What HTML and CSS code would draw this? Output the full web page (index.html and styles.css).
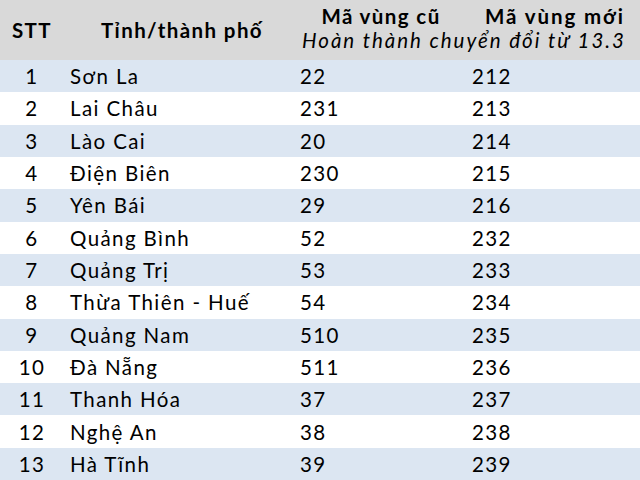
FILE: index.html
```html
<!DOCTYPE html>
<html lang="vi">
<head>
<meta charset="utf-8">
<link rel="stylesheet" href="styles.css">
</head>
<body>
<div class="table">
  <div class="head">
    <div class="h-stt">STT</div>
    <div class="h-name">Tỉnh/thành phố</div>
    <div class="h-old">Mã vùng cũ</div>
    <div class="h-new">Mã vùng mới</div>
    <div class="h-note">Hoàn thành chuyển đổi từ 13.3</div>
  </div>
  <div class="body">
    <div class="row alt"><span class="stt">1</span><span class="name">Sơn La</span><span class="old">22</span><span class="new">212</span></div>
    <div class="row"><span class="stt">2</span><span class="name">Lai Châu</span><span class="old">231</span><span class="new">213</span></div>
    <div class="row alt"><span class="stt">3</span><span class="name">Lào Cai</span><span class="old">20</span><span class="new">214</span></div>
    <div class="row"><span class="stt">4</span><span class="name">Điện Biên</span><span class="old">230</span><span class="new">215</span></div>
    <div class="row alt"><span class="stt">5</span><span class="name">Yên Bái</span><span class="old">29</span><span class="new">216</span></div>
    <div class="row"><span class="stt">6</span><span class="name">Quảng Bình</span><span class="old">52</span><span class="new">232</span></div>
    <div class="row alt"><span class="stt">7</span><span class="name">Quảng Trị</span><span class="old">53</span><span class="new">233</span></div>
    <div class="row"><span class="stt">8</span><span class="name">Thừa Thiên - Huế</span><span class="old">54</span><span class="new">234</span></div>
    <div class="row alt"><span class="stt">9</span><span class="name">Quảng Nam</span><span class="old">510</span><span class="new">235</span></div>
    <div class="row"><span class="stt">10</span><span class="name">Đà Nẵng</span><span class="old">511</span><span class="new">236</span></div>
    <div class="row alt"><span class="stt">11</span><span class="name">Thanh Hóa</span><span class="old">37</span><span class="new">237</span></div>
    <div class="row"><span class="stt">12</span><span class="name">Nghệ An</span><span class="old">38</span><span class="new">238</span></div>
    <div class="row alt"><span class="stt">13</span><span class="name">Hà Tĩnh</span><span class="old">39</span><span class="new">239</span></div>
  </div>
</div>
</body>
</html>
```
FILE: styles.css
```css
html, body {
  margin: 0;
  padding: 0;
  background: #ffffff;
}
body {
  width: 640px;
  height: 480px;
  overflow: hidden;
  font-family: Lato, "Open Sans", "Liberation Sans", sans-serif;
  color: #000000;
  font-size: 20.5px;
  letter-spacing: 1.4px;
}
.table {
  display: flex;
  flex-direction: column;
  height: 480px;
}
.head {
  height: 60px;
  background: #d9d9d9;
  display: grid;
  grid-template-columns: 64px 236px 172px 168px;
  grid-template-rows: 31px 18px 11px;
  font-weight: bold;
}
.h-stt, .h-name {
  grid-row: 1 / 4;
  display: flex;
  align-items: center;
  justify-content: center;
}
.h-old {
  display: flex;
  align-items: center;
  justify-content: center;
  padding-right: 10px;
}
.h-new {
  display: flex;
  align-items: center;
  justify-content: center;
  padding-right: 2px;
  letter-spacing: 1.9px;
}
.h-note {
  grid-column: 3 / 5;
  grid-row: 2;
  display: flex;
  align-items: center;
  justify-content: center;
  font-weight: normal;
  font-style: italic;
  padding-right: 12px;
  letter-spacing: 1.95px;
  white-space: nowrap;
}
.body {
  flex: 1;
  display: flex;
  flex-direction: column;
}
.row {
  flex: 1;
  display: grid;
  grid-template-columns: 64px 236px 172px 168px;
  align-items: center;
  background: #ffffff;
}
.row.alt {
  background: #dce6f2;
}
.stt {
  text-align: center;
}
.name {
  padding-left: 6px;
}
```
